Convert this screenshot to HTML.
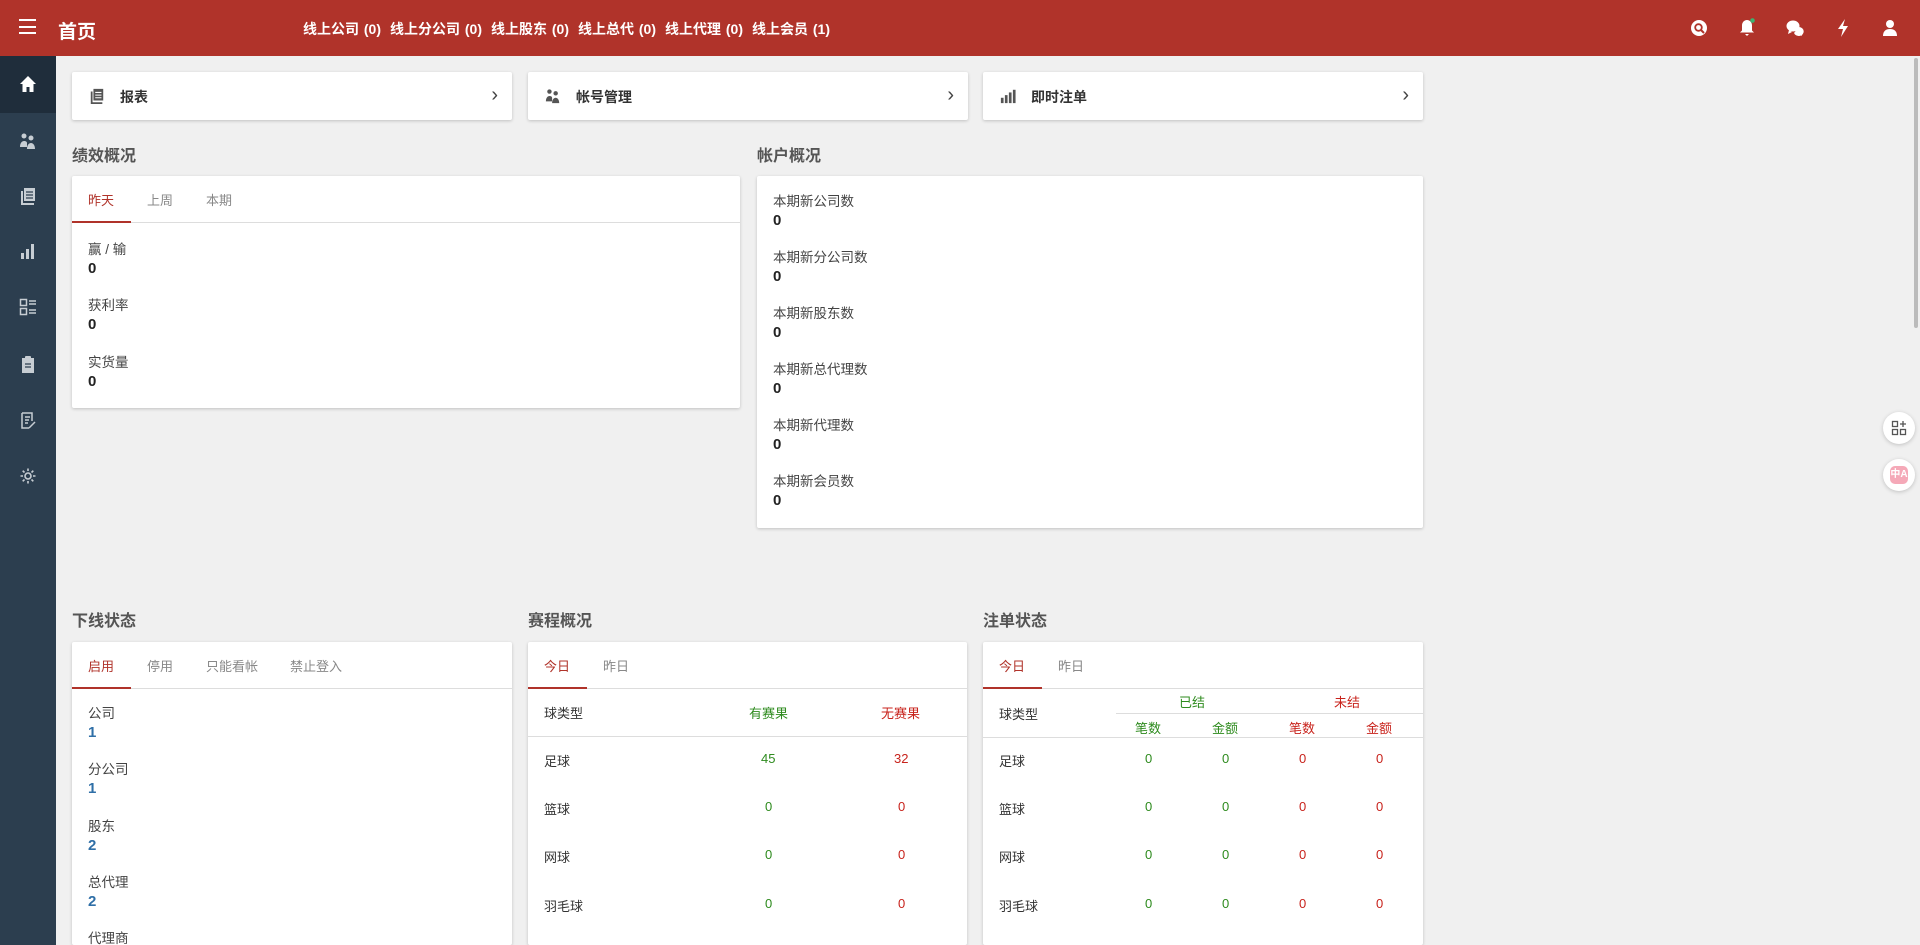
<!DOCTYPE html>
<html><head><meta charset="utf-8"><style>
*{box-sizing:border-box;margin:0;padding:0}
html,body{width:1920px;height:945px;overflow:hidden}
body{background:#f0f0f0;font-family:"Liberation Sans","Noto Sans CJK SC",sans-serif;color:#333;position:relative}
.hdr{position:absolute;left:0;top:0;width:1920px;height:56px;background:#b0332a;color:#fff}
.hdr .ham{position:absolute;left:19px;top:19px;width:17px;height:15px;border-top:2px solid #fff;border-bottom:2px solid #fff}
.hdr .ham:after{content:"";position:absolute;left:0;top:4.5px;width:17px;height:2px;background:#fff}
.hdr .tt{position:absolute;left:58px;top:17px;font-size:19px;font-weight:bold}
.hdr .links{position:absolute;left:303px;top:19px;font-size:14px;font-weight:bold;word-spacing:1px;white-space:nowrap}
.hdr .links span{margin-right:9px}
.ic{position:absolute;top:18px;width:20px;height:20px}
.side{position:absolute;left:0;top:56px;width:56px;height:889px;background:#2c3e4f}
.side .act{position:absolute;left:0;top:0;width:56px;height:57px;background:#1f2d3b}
.side svg{position:absolute;left:19px;width:18px;height:18px}
.card{position:absolute;background:#fff;box-shadow:0 1px 3px rgba(0,0,0,.2);border-radius:2px;overflow:hidden}
.qc{top:72px;height:48px;width:440px;font-size:14px;font-weight:bold}
.qc .lb{position:absolute;left:48px;top:15px}
.qc .ar{position:absolute;right:14px;top:12px;font-size:20px;font-weight:normal;color:#444}
.qc svg{position:absolute;left:17px;top:16px}
.st{position:absolute;font-size:16px;font-weight:bold;color:#555}
.tabs{position:absolute;left:0;top:0;right:0;height:47px;border-bottom:1px solid #ddd;font-size:13px;color:#888}
.tabs span{position:absolute;top:14px}
.tabs .on{color:#b0332a}
.tabs .ul{position:absolute;left:0;bottom:-1px;height:2px;background:#b0332a}
.it{position:absolute;left:16px;font-size:13.5px;color:#444}
.it b{display:block;font-size:15px;color:#222;margin-top:2px}
.it b.bl{color:#2f6fa7}
.t{position:absolute;font-size:13px;color:#333}
.g{color:#2e8b1e}.r{color:#c8231c}
.line{position:absolute;height:1px;background:#ddd}
.fb{position:absolute;left:1883px;width:32px;height:32px;border-radius:50%;background:#fff;box-shadow:0 1px 4px rgba(0,0,0,.2)}
</style></head><body>
<div class="hdr">
<div class="ham"></div><div class="tt">首页</div>
<div class="links"><span>线上公司 (0)</span><span>线上分公司 (0)</span><span>线上股东 (0)</span><span>线上总代 (0)</span><span>线上代理 (0)</span><span>线上会员 (1)</span></div>
<svg class="ic" style="left:1689px" viewBox="0 0 20 20"><circle cx="10" cy="10" r="8" fill="#fff"/><circle cx="9.5" cy="9.5" r="3.3" fill="none" stroke="#b0332a" stroke-width="1.8"/><path d="M12 12l3 3" stroke="#b0332a" stroke-width="2"/></svg>
<svg class="ic" style="left:1737px" viewBox="0 0 20 20"><path d="M10 2c-3 0-5 2.5-5 5.5v5l-2 2h14l-2-2v-5C15 4.5 13 2 10 2z M8 16h4l-2 2z" fill="#fff"/><circle cx="15.5" cy="2.5" r="2.3" fill="#3cb371"/></svg>
<svg class="ic" style="left:1785px" viewBox="0 0 20 20"><ellipse cx="8" cy="8" rx="6.5" ry="5.5" fill="#fff"/><path d="M4 12l-1 4 4-2z" fill="#fff"/><path d="M14 9a5 4.5 0 1 1-5 6" fill="#fff"/><path d="M15 16l2 2v-3z" fill="#fff"/></svg>
<svg class="ic" style="left:1833px" viewBox="0 0 20 20"><path d="M12 1L5 11h5l-2 8 7-11h-5z" fill="#fff"/></svg>
<svg class="ic" style="left:1880px" viewBox="0 0 20 20"><circle cx="10" cy="6" r="4" fill="#fff"/><path d="M3 18c0-5 3-7 7-7s7 2 7 7z" fill="#fff"/></svg>
</div>
<div class="side"><div class="act"></div>
<svg style="top:19px" viewBox="0 0 18 18"><path d="M9 1L1 9h2.5v8h4v-5h3v5h4V9H17z" fill="#fff"/></svg>
<svg style="top:76px" viewBox="0 0 18 18" fill="#c7cdd3"><circle cx="5" cy="4" r="2.5"/><circle cx="12" cy="6" r="2.5"/><path d="M1 15c0-4 2-6 4-6s3 1 3 2v4zM8 17c0-4 2-6 4-6s4 2 4 6z"/></svg>
<svg style="top:131px" viewBox="0 0 18 18" fill="#c7cdd3"><path d="M5 1h11v13H5z"/><path d="M2 4h2v12h11v2H2z"/><path d="M7 5h7M7 8h7M7 11h7" stroke="#2c3e4f" stroke-width="1.2"/></svg>
<svg style="top:186px" viewBox="0 0 18 18" fill="#c7cdd3"><rect x="2" y="11" width="3" height="6"/><rect x="7" y="7" width="3" height="10"/><rect x="12" y="2" width="3" height="15"/></svg>
<svg style="top:242px" viewBox="0 0 18 18" fill="none" stroke="#c7cdd3" stroke-width="1.5"><rect x="1.5" y="1.5" width="6" height="6"/><rect x="1.5" y="10.5" width="6" height="6"/><path d="M10 3h7M10 6h7M10 12h7M10 15h7"/></svg>
<svg style="top:299px" viewBox="0 0 18 18" fill="#c7cdd3"><path d="M3 3h12v15H3z"/><rect x="6" y="1" width="6" height="4" rx="1"/><path d="M6 9h6M6 12h6" stroke="#2c3e4f" stroke-width="1.3"/></svg>
<svg style="top:355px" viewBox="0 0 18 18" fill="none" stroke="#c7cdd3" stroke-width="1.5"><path d="M3 2h10v8M3 2v15h7M6 6h5M6 9h4M6 12h3M10 17l6-6"/></svg>
<svg style="top:411px" viewBox="0 0 18 18" fill="none" stroke="#c7cdd3" stroke-width="1.6"><circle cx="9" cy="9" r="3"/><path d="M9 1.5v2.5M9 14v2.5M1.5 9H4M14 9h2.5M3.7 3.7l1.8 1.8M12.5 12.5l1.8 1.8M3.7 14.3l1.8-1.8M12.5 5.5l1.8-1.8"/></svg>
</div>

<div class="card qc" style="left:72px"><svg width="16" height="16" viewBox="0 0 18 18" fill="#555"><path d="M5 1h11v13H5z"/><path d="M2 4h2v12h11v2H2z"/><path d="M7 5h7M7 8h7M7 11h7" stroke="#fff" stroke-width="1.2"/></svg><span class="lb">报表</span><span class="ar">›</span></div>
<div class="card qc" style="left:528px"><svg width="16" height="16" viewBox="0 0 18 18" fill="#555"><circle cx="5" cy="4" r="2.5"/><circle cx="12" cy="6" r="2.5"/><path d="M1 15c0-4 2-6 4-6s3 1 3 2v4zM8 17c0-4 2-6 4-6s4 2 4 6z"/></svg><span class="lb">帐号管理</span><span class="ar">›</span></div>
<div class="card qc" style="left:983px"><svg width="16" height="16" viewBox="0 0 18 18" fill="#555"><rect x="1" y="11" width="3" height="6"/><rect x="5.5" y="8" width="3" height="9"/><rect x="10" y="5" width="3" height="12"/><rect x="14.5" y="2" width="3" height="15"/></svg><span class="lb">即时注单</span><span class="ar">›</span></div>

<div class="st" style="left:72px;top:142px">绩效概况</div>
<div class="st" style="left:757px;top:142px">帐户概况</div>
<div class="card" style="left:72px;top:176px;width:668px;height:232px">
<div class="tabs"><span class="on" style="left:16px">昨天</span><span style="left:75px">上周</span><span style="left:134px">本期</span><div class="ul" style="width:59px"></div></div>
<div class="it" style="top:62px">赢 / 输<b>0</b></div>
<div class="it" style="top:118px">获利率<b>0</b></div>
<div class="it" style="top:175px">实货量<b>0</b></div>
</div>
<div class="card" style="left:757px;top:176px;width:666px;height:352px">
<div class="it" style="top:14px">本期新公司数<b>0</b></div>
<div class="it" style="top:70px">本期新分公司数<b>0</b></div>
<div class="it" style="top:126px">本期新股东数<b>0</b></div>
<div class="it" style="top:182px">本期新总代理数<b>0</b></div>
<div class="it" style="top:238px">本期新代理数<b>0</b></div>
<div class="it" style="top:294px">本期新会员数<b>0</b></div>
</div>

<div class="st" style="left:72px;top:607px">下线状态</div>
<div class="st" style="left:528px;top:607px">赛程概况</div>
<div class="st" style="left:983px;top:607px">注单状态</div>
<div class="card" style="left:72px;top:642px;width:440px;height:303px">
<div class="tabs"><span class="on" style="left:16px">启用</span><span style="left:75px">停用</span><span style="left:134px">只能看帐</span><span style="left:218px">禁止登入</span><div class="ul" style="width:59px"></div></div>
<div class="it" style="top:60px">公司<b class="bl">1</b></div>
<div class="it" style="top:116px">分公司<b class="bl">1</b></div>
<div class="it" style="top:173px">股东<b class="bl">2</b></div>
<div class="it" style="top:229px">总代理<b class="bl">2</b></div>
<div class="it" style="top:285px">代理商<b class="bl">2</b></div>
</div>
<div class="card" style="left:528px;top:642px;width:439px;height:303px">
<div class="tabs"><span class="on" style="left:16px">今日</span><span style="left:75px">昨日</span><div class="ul" style="width:59px"></div></div>
<div class="t" style="left:16px;top:61px">球类型</div><div class="t g" style="left:221px;top:61px">有赛果</div><div class="t r" style="left:353px;top:61px">无赛果</div>
<div class="line" style="left:0;right:0;top:94px"></div>
<div class="t" style="left:16px;top:109px">足球</div><div class="t g" style="left:233px;top:109px">45</div><div class="t r" style="left:366px;top:109px">32</div>
<div class="t" style="left:16px;top:157px">篮球</div><div class="t g" style="left:237px;top:157px">0</div><div class="t r" style="left:370px;top:157px">0</div>
<div class="t" style="left:16px;top:205px">网球</div><div class="t g" style="left:237px;top:205px">0</div><div class="t r" style="left:370px;top:205px">0</div>
<div class="t" style="left:16px;top:254px">羽毛球</div><div class="t g" style="left:237px;top:254px">0</div><div class="t r" style="left:370px;top:254px">0</div>
</div>
<div class="card" style="left:983px;top:642px;width:440px;height:303px">
<div class="tabs"><span class="on" style="left:16px">今日</span><span style="left:75px">昨日</span><div class="ul" style="width:59px"></div></div>
<div class="t" style="left:16px;top:62px">球类型</div>
<div class="t g" style="left:196px;top:50px">已结</div><div class="t r" style="left:351px;top:50px">未结</div>
<div class="line" style="left:133px;right:0;top:71px"></div>
<div class="t g" style="left:152px;top:76px">笔数</div><div class="t g" style="left:229px;top:76px">金额</div><div class="t r" style="left:306px;top:76px">笔数</div><div class="t r" style="left:383px;top:76px">金额</div>
<div class="line" style="left:0;right:0;top:95px"></div>
<div class="t" style="left:16px;top:109px">足球</div><div class="t g" style="left:162px;top:109px">0</div><div class="t g" style="left:239px;top:109px">0</div><div class="t r" style="left:316px;top:109px">0</div><div class="t r" style="left:393px;top:109px">0</div>
<div class="t" style="left:16px;top:157px">篮球</div><div class="t g" style="left:162px;top:157px">0</div><div class="t g" style="left:239px;top:157px">0</div><div class="t r" style="left:316px;top:157px">0</div><div class="t r" style="left:393px;top:157px">0</div>
<div class="t" style="left:16px;top:205px">网球</div><div class="t g" style="left:162px;top:205px">0</div><div class="t g" style="left:239px;top:205px">0</div><div class="t r" style="left:316px;top:205px">0</div><div class="t r" style="left:393px;top:205px">0</div>
<div class="t" style="left:16px;top:254px">羽毛球</div><div class="t g" style="left:162px;top:254px">0</div><div class="t g" style="left:239px;top:254px">0</div><div class="t r" style="left:316px;top:254px">0</div><div class="t r" style="left:393px;top:254px">0</div>
</div>

<div style="position:absolute;left:1913px;top:56px;width:7px;height:889px;background:#f0f0f0"></div>
<div style="position:absolute;left:1914px;top:58px;width:4px;height:270px;background:#bbb;border-radius:2px"></div>
<div class="fb" style="top:412px"><svg style="position:absolute;left:8px;top:8px" width="16" height="16" viewBox="0 0 16 16" fill="none" stroke="#555" stroke-width="1.3"><rect x="1.5" y="1.5" width="5" height="5"/><rect x="1.5" y="9.5" width="5" height="5"/><rect x="9.5" y="9.5" width="5" height="5"/><path d="M12 1v6M9 4h6"/></svg></div>
<div class="fb" style="top:459px"><div style="position:absolute;left:7px;top:7px;width:18px;height:18px;border-radius:5px;background:#f5a9b8;color:#fff;font-size:10px;text-align:center;line-height:18px;font-weight:bold">中A</div></div>
</body></html>
